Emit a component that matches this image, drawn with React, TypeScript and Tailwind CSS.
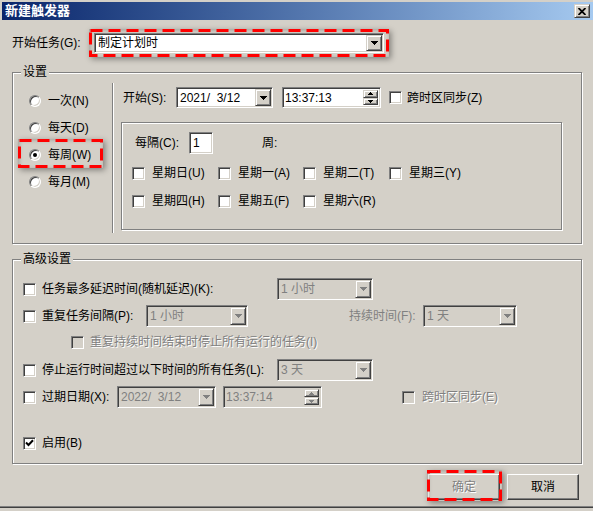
import React from "react";

const sunken =
  "border border-t-[#808080] border-l-[#808080] border-r-white border-b-white shadow-[inset_1px_1px_0_#404040,inset_-1px_-1px_0_#d4d0c8]";
const raised =
  "border border-t-[#d4d0c8] border-l-[#d4d0c8] border-r-[#404040] border-b-[#404040] bg-[#d4d0c8] shadow-[inset_1px_1px_0_#fff,inset_-1px_-1px_0_#808080]";
const dimText = "text-[#808080] [text-shadow:1px_1px_0_#fff]";

function Tri({ up, disabled, small }: { up?: boolean; disabled?: boolean; small?: boolean }) {
  const w = small ? 5 : 7;
  const h = small ? 3 : 4;
  const d = up ? `M0 ${h}H${w}L${w / 2} 0Z` : `M0 0H${w}L${w / 2} ${h}Z`;
  return (
    <svg width={w} height={h} viewBox={`0 0 ${w} ${h}`} shapeRendering="crispEdges">
      <path d={d} fill={disabled ? "#808080" : "#000"} />
    </svg>
  );
}

function Arrow({ disabled }: { disabled?: boolean }) {
  return (
    <div className={`flex h-full w-[16px] shrink-0 items-center justify-center ${raised}`}>
      <Tri disabled={disabled} />
    </div>
  );
}

function Combo({
  text,
  w,
  h = "h-[22px]",
  disabled,
}: {
  text: string;
  w: string;
  h?: string;
  disabled?: boolean;
}) {
  return (
    <div
      className={`flex ${w} ${h} shrink-0 p-[1px] ${sunken} ${disabled ? "bg-[#d4d0c8]" : "bg-white"}`}
    >
      <span
        className={`flex flex-1 items-center whitespace-pre pl-[2px] ${disabled ? "text-[#808080]" : "text-black"}`}
      >
        {text}
      </span>
      <Arrow disabled={disabled} />
    </div>
  );
}

function Spin({ disabled }: { disabled?: boolean }) {
  return (
    <div className="flex h-full w-[15px] shrink-0 flex-col py-[1px]">
      <div className={`flex flex-1 items-center justify-center ${raised}`}>
        <Tri up small disabled={disabled} />
      </div>
      <div className={`flex flex-1 items-center justify-center ${raised}`}>
        <Tri small disabled={disabled} />
      </div>
    </div>
  );
}

function TimeBox({ text, w, h, disabled }: { text: string; w: string; h: string; disabled?: boolean }) {
  return (
    <div
      className={`flex ${w} ${h} shrink-0 p-[1px] pr-[2px] ${sunken} ${disabled ? "bg-[#d4d0c8]" : "bg-white"}`}
    >
      <span className={`flex flex-1 items-center pl-[1px] ${disabled ? "text-[#808080]" : "text-black"}`}>
        {text}
      </span>
      <Spin disabled={disabled} />
    </div>
  );
}

function Check({ checked, disabled }: { checked?: boolean; disabled?: boolean }) {
  return (
    <span
      className={`flex h-[13px] w-[13px] shrink-0 items-center justify-center ${sunken} ${disabled ? "bg-[#d4d0c8]" : "bg-white"}`}
    >
      {checked && (
        <svg width="9" height="8" viewBox="0 0 9 8">
          <path d="M1 3.5L3.5 6L8 1.2" fill="none" stroke="#000" strokeWidth="2" />
        </svg>
      )}
    </span>
  );
}

function Radio({ checked }: { checked?: boolean }) {
  return (
    <span
      className={`flex h-[12px] w-[12px] shrink-0 items-center justify-center rounded-full bg-white ${sunken}`}
    >
      {checked && <span className="h-[4px] w-[4px] rounded-full bg-black" />}
    </span>
  );
}

function Group({ label, className, children }: { label: string; className: string; children?: React.ReactNode }) {
  return (
    <div className={`relative border border-[#808080] shadow-[inset_1px_1px_0_#fff,1px_1px_0_#fff] ${className}`}>
      <span className="absolute -top-[8px] left-[8px] bg-[#d4d0c8] px-[2px] leading-[14px]">{label}</span>
      {children}
    </div>
  );
}

// red dashed annotation drawn over a control
function RedMark({ className, w, h }: { className: string; w: number; h: number }) {
  return (
    <div
      className={`pointer-events-none absolute shadow-[2px_2px_6px_rgba(0,0,0,0.4),inset_1px_1px_4px_rgba(0,0,0,0.25)] ${className}`}
    >
      <svg width={w} height={h} className="block">
        <rect
          x="1.5"
          y="1.5"
          width={w - 3}
          height={h - 3}
          fill="none"
          stroke="#ff0000"
          strokeWidth="3"
          strokeDasharray="12 6"
        />
      </svg>
    </div>
  );
}

const days = [
  ["星期日(U)", "星期一(A)", "星期二(T)", "星期三(Y)"],
  ["星期四(H)", "星期五(F)", "星期六(R)"],
];
const colW = ["w-[86px]", "w-[85px]", "w-[86px]", "w-[86px]"];

export default function App() {
  return (
    <div className="h-[511px] w-[593px] overflow-hidden bg-[#d4d0c8] font-['Liberation_Sans','Noto_Sans_CJK_SC',sans-serif] text-[12px] leading-[14px] text-black">
      <div className="flex h-[508px] flex-col border-b border-[#404040] shadow-[inset_0_-1px_0_#808080]">
        {/* title bar */}
        <div className="ml-[2px] mt-[2px] flex h-[18px] items-center justify-between bg-linear-to-r from-[#0a246a] to-[#a6caf0] pl-[3px] pr-[3px]">
          <span className="text-[13px] font-bold text-white">新建触发器</span>
          <div className={`flex h-[14px] w-[16px] items-center justify-center ${raised}`}>
            <svg width="8" height="7" viewBox="0 0 8 7">
              <path d="M0.5 0L7.5 7M7.5 0L0.5 7" stroke="#000" strokeWidth="1.8" />
            </svg>
          </div>
        </div>

        {/* start task */}
        <div className="mt-[13px] flex h-[20px] items-center pl-[12px]">
          <span className="w-[82px]">开始任务(G):</span>
          <div className="relative">
            <Combo text="制定计划时" w="w-[290px]" h="h-[20px]" />
            <RedMark className="-left-[5px] -top-[4px]" w={300} h={28} />
          </div>
        </div>

        {/* settings */}
        <Group label="设置" className="ml-[12px] mt-[19px] h-[172px] w-[570px]">
          <div className="flex">
            <div className="flex w-[99px] flex-col pt-[14px]">
              {[
                ["一次(N)", false],
                ["每天(D)", false],
                ["每周(W)", true],
                ["每月(M)", false],
              ].map(([t, c]) => (
                <div key={t as string} className="relative flex h-[27px] items-center gap-[7px] pl-[16px]">
                  <Radio checked={c as boolean} />
                  <span>{t as string}</span>
                  {c && <RedMark className="-top-[2px] left-[5px]" w={85} h={29} />}
                </div>
              ))}
            </div>
            <div className="mt-[10px] h-[150px] w-[2px] border-l border-r border-l-[#808080] border-r-white" />
            <div className="flex flex-col pt-[14px]">
              <div className="ml-[9px] flex h-[21px] items-center">
                <span className="w-[53px]">开始(S):</span>
                <Combo text="2021/  3/12" w="w-[97px]" h="h-[21px]" />
                <div className="ml-[9px]">
                  <TimeBox text="13:37:13" w="w-[99px]" h="h-[21px]" />
                </div>
                <div className="ml-[8px] flex items-center gap-[5px]">
                  <Check />
                  <span>跨时区同步(Z)</span>
                </div>
              </div>
              <div className="ml-[7px] mt-[14px] h-[108px] w-[441px] border border-[#808080] shadow-[inset_1px_1px_0_#fff,1px_1px_0_#fff]">
                <div className="ml-[13px] mt-[9px] flex h-[22px] items-center">
                  <span className="w-[54px]">每隔(C):</span>
                  <div className={`flex h-[22px] w-[24px] items-center bg-white pl-[3px] ${sunken}`}>1</div>
                  <span className="ml-[49px]">周:</span>
                </div>
                {days.map((row, i) => (
                  <div key={i} className={`ml-[10px] flex h-[20px] ${i === 0 ? "mt-[9px]" : "mt-[8px]"}`}>
                    {row.map((d, j) => (
                      <div key={d} className={`flex items-center gap-[7px] ${colW[j]}`}>
                        <Check />
                        <span>{d}</span>
                      </div>
                    ))}
                  </div>
                ))}
              </div>
            </div>
          </div>
        </Group>

        {/* advanced */}
        <Group label="高级设置" className="ml-[12px] mt-[15px] h-[205px] w-[570px]">
          <div className="flex flex-col pl-[10px]">
            <div className="mt-[18px] flex h-[22px] items-center">
              <Check />
              <span className="ml-[6px] w-[235px]">任务最多延迟时间(随机延迟)(K):</span>
              <Combo text="1 小时" w="w-[96px]" disabled />
            </div>
            <div className="mt-[5px] flex h-[22px] items-center">
              <Check />
              <span className="ml-[6px] w-[104px]">重复任务间隔(P):</span>
              <Combo text="1 小时" w="w-[102px]" disabled />
              <span className="ml-[101px] w-[74px] text-[#808080]">持续时间(F):</span>
              <Combo text="1 天" w="w-[94px]" disabled />
            </div>
            <div className="ml-[48px] mt-[4px] flex h-[22px] items-center">
              <Check disabled />
              <span className={`ml-[6px] ${dimText}`}>重复持续时间结束时停止所有运行的任务(I)</span>
            </div>
            <div className="mt-[6px] flex h-[22px] items-center">
              <Check />
              <span className="ml-[6px] w-[235px]">停止运行时间超过以下时间的所有任务(L):</span>
              <Combo text="3 天" w="w-[96px]" disabled />
            </div>
            <div className="mt-[5px] flex h-[22px] items-center">
              <Check />
              <span className="ml-[6px] w-[75px]">过期日期(X):</span>
              <Combo text="2022/  3/12" w="w-[99px]" disabled />
              <div className="ml-[7px]">
                <TimeBox text="13:37:14" w="w-[99px]" h="h-[22px]" disabled />
              </div>
              <div className="ml-[80px] flex items-center gap-[7px]">
                <Check disabled />
                <span className={dimText}>跨时区同步(E)</span>
              </div>
            </div>
            <div className="mt-[24px] flex h-[22px] items-center">
              <Check checked />
              <span className="ml-[6px]">启用(B)</span>
            </div>
          </div>
        </Group>

        {/* buttons */}
        <div className="mt-[10px] flex justify-end gap-[7px] pr-[14px]">
          <div className="relative">
            <div
              className={`flex h-[26px] w-[72px] items-center justify-center border border-t-white border-l-white border-r-[#404040] border-b-[#404040] bg-[#d4d0c8] shadow-[inset_-1px_-1px_0_#808080] ${dimText}`}
            >
              确定
            </div>
            <RedMark className="-left-[1px] -top-[4px]" w={75} h={31} />
          </div>
          <div className="flex h-[26px] w-[72px] items-center justify-center border border-t-white border-l-white border-r-[#404040] border-b-[#404040] bg-[#d4d0c8] shadow-[inset_-1px_-1px_0_#808080]">
            取消
          </div>
        </div>
      </div>
    </div>
  );
}
